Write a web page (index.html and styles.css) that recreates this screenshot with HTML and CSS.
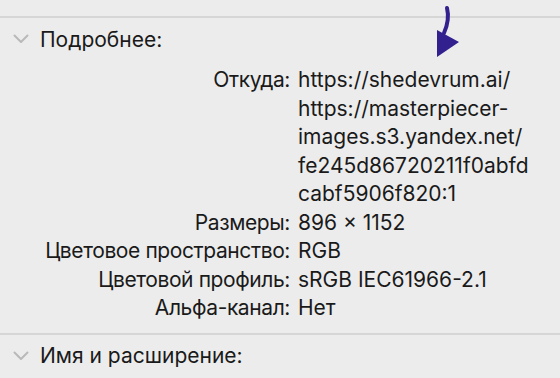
FILE: index.html
```html
<!DOCTYPE html>
<html lang="ru">
<head>
  <meta charset="UTF-8">
  <title>Свойства</title>
  <link rel="stylesheet" href="styles.css">
</head>
<body>

  <div class="panel">
    <div class="section">
      <div class="section-head">
        <span class="chevron">
          <svg width="16" height="10" viewBox="0 0 16 10"><path d="M1.5 1.5 L8 8 L14.5 1.5" fill="none" stroke="#b9b9b9" stroke-width="2" stroke-linecap="round" stroke-linejoin="round"/></svg>
        </span>
        <span>Подробнее:</span>
      </div>

      <div class="info">
        <div class="label">Откуда:</div>
        <div class="value">https://shedevrum.ai/<br>https://masterpiecer-<br>images.s3.yandex.net/<br>fe245d86720211f0abfd<br>cabf5906f820:1</div>

        <div class="label">Размеры:</div>
        <div class="value">896 × 1152</div>

        <div class="label">Цветовое пространство:</div>
        <div class="value">RGB</div>

        <div class="label">Цветовой профиль:</div>
        <div class="value">sRGB IEC61966-2.1</div>

        <div class="label">Альфа-канал:</div>
        <div class="value">Нет</div>
      </div>

      <!-- annotation arrow -->
      <svg class="arrow" width="30" height="60" viewBox="0 0 30 60">
        <path d="M17 8 C19 16 18 24 14 33" fill="none" stroke="#33208f" stroke-width="4" stroke-linecap="round"/>
        <polygon points="7,30 29,42 7,57" fill="#33208f"/>
      </svg>
    </div>

    <div class="section">
      <div class="section-head">
        <span class="chevron">
          <svg width="16" height="10" viewBox="0 0 16 10"><path d="M1.5 1.5 L8 8 L14.5 1.5" fill="none" stroke="#b9b9b9" stroke-width="2" stroke-linecap="round" stroke-linejoin="round"/></svg>
        </span>
        <span>Имя и расширение:</span>
      </div>
    </div>
  </div>

</body>
</html>
```

FILE: styles.css
```css
body {
  margin: 0;
  background: #ececec;
  font-family: Inter, "Liberation Sans", Arial, sans-serif;
  font-size: 21px;
  color: #1a1a1a;
}

.panel {
  padding-top: 16px;
}

.section {
  position: relative;
  border-top: 2px solid #d6d6d6;
}

.section-head {
  display: flex;
  align-items: center;
  height: 42px;
  padding-left: 13px;
}

.chevron {
  display: flex;
  width: 27px;
}

.info {
  display: grid;
  grid-template-columns: 290px 1fr;
  column-gap: 8px;
  line-height: 28.5px;
  padding-top: 6px;
  padding-bottom: 10px;
}

.label {
  text-align: right;
  letter-spacing: -0.4px;
}

.arrow {
  position: absolute;
  left: 430px;
  top: -18px;
}
```
